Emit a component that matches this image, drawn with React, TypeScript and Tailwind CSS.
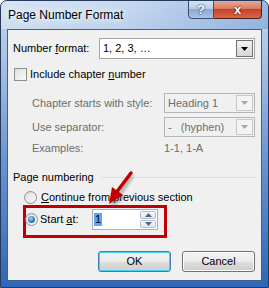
import React from 'react';

function Chevron({ color }: { color: string }) {
  return (
    <svg width="7" height="4" viewBox="0 0 7 4">
      <path d="M0 0h7L3.5 4z" fill={color} />
    </svg>
  );
}

function Combo({
  value,
  width,
  height,
  disabled,
}: {
  value: string;
  width: string;
  height: string;
  disabled?: boolean;
}) {
  return (
    <div
      className={`${width} ${height} flex items-stretch border ${
        disabled ? 'border-[#b5b5b5] bg-[#f0f0f0] text-[#6d6d6d]' : 'border-[#a5a5a5] bg-white text-black'
      }`}
    >
      <span className="flex-1 flex items-center pl-[3px] whitespace-pre">{value}</span>
      <span
        className={`w-[17px] m-px flex items-center justify-center border ${
          disabled
            ? 'border-[#c8c8c8] bg-[#f4f4f4]'
            : 'border-[#707070] bg-gradient-to-b from-[#f3f3f3] to-[#d6d6d6]'
        }`}
      >
        <Chevron color={disabled ? '#a8a8a8' : '#000'} />
      </span>
    </div>
  );
}

function Radio({ checked }: { checked?: boolean }) {
  return (
    <span className="w-[13px] h-[13px] rounded-full border border-[#8e8f8f] bg-gradient-to-br from-[#dcdcdc] to-[#fbfbfb] flex items-center justify-center shrink-0">
      {checked && (
        <span className="w-[7px] h-[7px] rounded-full bg-[radial-gradient(circle_at_40%_35%,#a6dcf7,#2b7fc4_55%,#14416d)]" />
      )}
    </span>
  );
}

function Button({ label, isDefault }: { label: string; isDefault?: boolean }) {
  return (
    <div
      className={`w-[73px] h-[21px] rounded-[3px] border flex items-center justify-center ${
        isDefault
          ? 'border-[#3c7fb1] shadow-[inset_0_0_0_1px_#48d1f6] bg-[linear-gradient(#f2f2f2_0%,#ebebeb_50%,#dddddd_51%,#cfcfcf_100%)]'
          : 'border-[#707070] shadow-[inset_0_0_0_1px_#fcfcfc] bg-[linear-gradient(#f2f2f2_0%,#ebebeb_50%,#dddddd_51%,#cfcfcf_100%)]'
      }`}
    >
      {label}
    </div>
  );
}

export default function App() {
  return (
    <div className="w-[269px] h-[288px] relative overflow-hidden rounded-t-[7px] border border-[#25395a] bg-[linear-gradient(#c2d6ee_0%,#a9c3e6_20%,#6c95d0_55%,#2f66b8_100%)] flex flex-col font-['Liberation_Sans',Arial,sans-serif] text-[11px] text-black">
      {/* title bar */}
      <div className="h-[28px] flex items-start justify-between bg-[linear-gradient(100deg,rgba(255,255,255,0.35)_0%,rgba(255,255,255,0.1)_45%,rgba(80,130,200,0.35)_100%)]">
        <span className="ml-[7px] mt-[6px] text-[12px] leading-[16px] [text-shadow:0_0_6px_#fff,0_0_10px_#fff]">
          Page Number Format
        </span>
        <div className="flex mr-[6px] -mt-px">
          <div className="w-[26px] h-[19px] rounded-bl-[4px] border border-[#3b4f70] bg-[linear-gradient(#d7e3f1_0%,#b9cde6_45%,#8aa9d2_50%,#a9c4e6_100%)] flex items-center justify-center text-white font-bold text-[13px] [text-shadow:0_0_2px_#263d5f,0_0_1px_#263d5f]">
            ?
          </div>
          <div className="w-[48px] h-[19px] rounded-br-[4px] border border-l-0 border-[#4a2018] bg-[linear-gradient(#e9a896_0%,#d97a62_45%,#c7412b_50%,#d9674a_100%)] flex items-center justify-center text-white font-bold text-[13px] [text-shadow:0_0_2px_#4b1a10,0_0_1px_#4b1a10]">
            x
          </div>
        </div>
      </div>

      {/* client area */}
      <div className="flex-1 mx-[6px] mb-[6px] border border-[#42608c] bg-[#f0f0f0] flex flex-col pl-[5px] pr-[5px]">
        <div className="mt-[8px] h-[21px] flex items-center">
          <span className="w-[86px]">
            Number <u>f</u>ormat:
          </span>
          <Combo value="1, 2, 3, …" width="w-[156px]" height="h-[21px]" />
        </div>

        <div className="mt-[9px] h-[13px] flex items-center">
          <span className="ml-px w-[13px] h-[13px] border border-[#8e8f8f] bg-gradient-to-br from-[#dedede] to-[#fbfbfb] shrink-0" />
          <span className="ml-[3px]">
            Include chapter <u>n</u>umber
          </span>
        </div>

        <div className="mt-[12px] h-[20px] flex items-center text-[#6d6d6d]">
          <span className="w-[151px] pl-[19px]">Chapter starts with style:</span>
          <Combo value="Heading 1" width="w-[91px]" height="h-[20px]" disabled />
        </div>

        <div className="mt-[4px] h-[20px] flex items-center text-[#6d6d6d]">
          <span className="w-[151px] pl-[19px]">Use separator:</span>
          <Combo value="-   (hyphen)" width="w-[91px]" height="h-[20px]" disabled />
        </div>

        <div className="mt-[3px] h-[16px] flex items-center text-[#6d6d6d]">
          <span className="w-[151px] pl-[19px]">Examples:</span>
          <span>1-1, 1-A</span>
        </div>

        <div className="mt-[14px] h-[14px] flex items-center">
          <span>Page numbering</span>
          <span className="flex-1 ml-[8px] border-t border-[#d5dfe5]" />
        </div>

        <div className="mt-[7px] h-[13px] flex items-center">
          <span className="ml-[11px]">
            <Radio />
          </span>
          <span className="ml-[4px]">
            <u>C</u>ontinue from previous section
          </span>
        </div>

        <div className="mt-px ml-[10px] w-[144px] h-[33px] border-[3px] border-[#c00000]">
          <div className="mt-px h-[21px] flex items-center">
            <span className="-ml-px">
              <Radio checked />
            </span>
            <span className="ml-[2px] w-[52px]">
              Start <u>a</u>t:
            </span>
            <div className="w-[66px] h-[21px] border border-[#abadb3] bg-white flex items-stretch">
              <span className="flex-1 flex items-center pl-px">
                <span className="bg-[#5ea6ee] px-px leading-[13px]">1</span>
              </span>
              <div className="w-[16px] flex flex-col gap-px m-px">
                <span className="flex-1 border border-[#b3bfd2] rounded-[2px] bg-gradient-to-b from-[#f7f9fc] to-[#dfe6f0] flex items-center justify-center">
                  <svg width="7" height="4" viewBox="0 0 7 4">
                    <path d="M3.5 0L7 4H0z" fill="#4f6586" />
                  </svg>
                </span>
                <span className="flex-1 border border-[#b3bfd2] rounded-[2px] bg-gradient-to-b from-[#f7f9fc] to-[#dfe6f0] flex items-center justify-center">
                  <Chevron color="#4f6586" />
                </span>
              </div>
            </div>
          </div>
        </div>

        <div className="mt-[13px] flex justify-end gap-[11px] mr-px">
          <Button label="OK" isDefault />
          <Button label="Cancel" />
        </div>
      </div>

      {/* red pointer arrow */}
      <svg className="absolute left-[98px] top-[168px]" width="40" height="40" viewBox="0 0 40 40">
        <defs>
          <filter id="sh" x="-50%" y="-50%" width="200%" height="200%">
            <feGaussianBlur stdDeviation="1.5" />
          </filter>
        </defs>
        <g transform="translate(2 3)" fill="#555" opacity="0.45" filter="url(#sh)">
          <path d="M31 4 L19 22" stroke="#555" strokeWidth="3.5" />
          <path d="M10 35 L13 18 L24 26 Z" />
        </g>
        <path d="M32 4 L18.5 22" stroke="#c00000" strokeWidth="3.5" strokeLinecap="round" />
        <path d="M10 35 L13 18 L24 26 Z" fill="#c00000" />
      </svg>
    </div>
  );
}
